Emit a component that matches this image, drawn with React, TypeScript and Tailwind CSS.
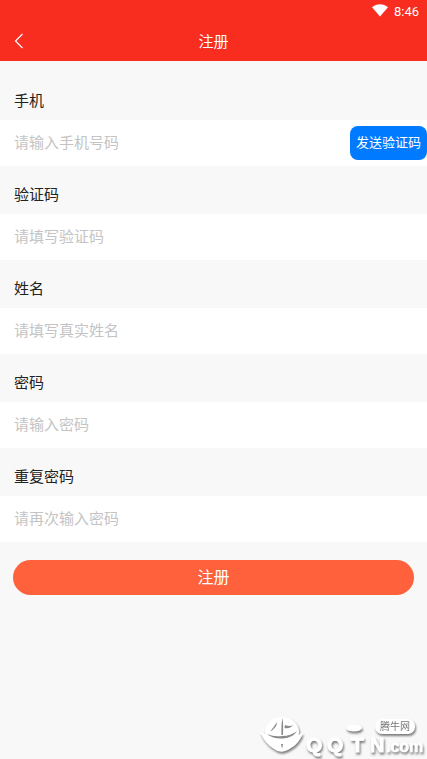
import { useState } from "react";

interface Field {
  id: string;
  label: string;
  placeholder: string;
  type: string;
}

const FIELDS: Field[] = [
  { id: "phone", label: "手机", placeholder: "请输入手机号码", type: "tel" },
  { id: "code", label: "验证码", placeholder: "请填写验证码", type: "text" },
  { id: "name", label: "姓名", placeholder: "请填写真实姓名", type: "text" },
  { id: "password", label: "密码", placeholder: "请输入密码", type: "password" },
  { id: "confirm", label: "重复密码", placeholder: "请再次输入密码", type: "password" },
];

function StatusBar() {
  return (
    <div className="flex h-6 items-center justify-end gap-[6px] pr-2 text-white">
      <svg width="16" height="24" viewBox="0 0 16 24" fill="currentColor" aria-hidden="true">
        <path d="M0 7.2C4.6 3.3 11.4 3.3 16 7.2L8 16.6z" />
      </svg>
      <span className="font-['Roboto',sans-serif] text-[13px] leading-6">8:46</span>
    </div>
  );
}

function Header() {
  return (
    <header className="bg-[#f92c20] pb-[3px] text-white">
      <StatusBar />
      <div className="grid h-[34px] grid-cols-3 items-center px-3">
        <button type="button" aria-label="返回" className="flex h-8 w-6 items-center">
          <svg width="12" height="18" viewBox="0 0 12 18" fill="none" stroke="currentColor" strokeWidth="1.2">
            <path d="M10.5 2L3.5 9l7 7" />
          </svg>
        </button>
        <h1 className="text-center text-[15px] leading-6">注册</h1>
      </div>
    </header>
  );
}

function SiteLogo() {
  return (
    <svg
      width="168"
      height="46"
      viewBox="0 0 168 46"
      fill="#fff"
      className="drop-shadow-[1px_2px_1px_rgba(0,0,0,0.5)]"
      role="img"
      aria-label="腾牛网 QQTN.com"
    >
      {/* round bull emblem with horns */}
      <ellipse cx="23" cy="19" rx="17" ry="15" />
      <path d="M1 19Q7 20 10 26L36 26Q40 20 44 20Q40 31 32 35Q22 42 15 36Q6 31 1 19z" />
      <g fill="#8a8a8a">
        <path d="M18 9Q18 15 11 18.500Q15 14 18 9z" />
        <path d="M23.500 5Q24.500 12 24 22L22.500 22Q22 12 23.500 5z" />
        <path d="M26 12Q31 14 34 12Q31 16 25.500 15z" />
        <path d="M8 21Q15 24 23 23Q32 23 38 18Q34 25 24 25.500Q14 26 8 21z" />
        <path d="M22 31l2 0l-1 5z" />
      </g>
      <ellipse cx="95" cy="15" rx="8" ry="3.500" />
      <rect x="116" y="6" width="40" height="15" rx="7" />
      <g fontFamily="Liberation Sans, sans-serif" fontWeight="700" stroke="#fff">
        <text x="47 68 92" y="39" fontSize="21">QQT</text>
        <text x="111" y="39" fontSize="20">N</text>
        <text x="127" y="39" fontSize="16" strokeWidth="0.5">.com</text>
      </g>
      <text x="121" y="17" fill="#777" fontSize="10" fontFamily="Noto Sans CJK SC, sans-serif">腾牛网</text>
    </svg>
  );
}

export default function App() {
  const [values, setValues] = useState<Record<string, string>>({});

  return (
    <div className="flex min-h-screen flex-col bg-[#f8f8f8] font-['Noto_Sans_CJK_SC',sans-serif] text-[#222]">
      <Header />
      <form className="pt-[11px]" onSubmit={(e) => e.preventDefault()}>
        {FIELDS.map((field) => (
          <div key={field.id}>
            <label htmlFor={field.id} className="block h-12 px-[14px] pt-4 text-[15px] leading-6">
              {field.label}
            </label>
            <div className="flex items-center bg-white">
              <input
                id={field.id}
                type={field.type}
                placeholder={field.placeholder}
                value={values[field.id] ?? ""}
                onChange={(e) => setValues({ ...values, [field.id]: e.target.value })}
                className="h-[46px] min-w-0 flex-1 px-[14px] pb-1 text-[15px] outline-none placeholder:text-[#c4c4c4]"
              />
              {field.id === "phone" && (
                <button type="button" className="h-[34px] rounded-lg bg-[#007aff] px-[6px] pb-[2px] text-[13px] text-white">
                  发送验证码
                </button>
              )}
            </div>
          </div>
        ))}
        <div className="px-[13px] pt-[18px]">
          <button type="submit" className="h-[35px] w-full rounded-full bg-[#ff613c] pb-1 text-base text-white">
            注册
          </button>
        </div>
      </form>
      <footer className="mt-auto flex justify-end">
        <SiteLogo />
      </footer>
    </div>
  );
}
